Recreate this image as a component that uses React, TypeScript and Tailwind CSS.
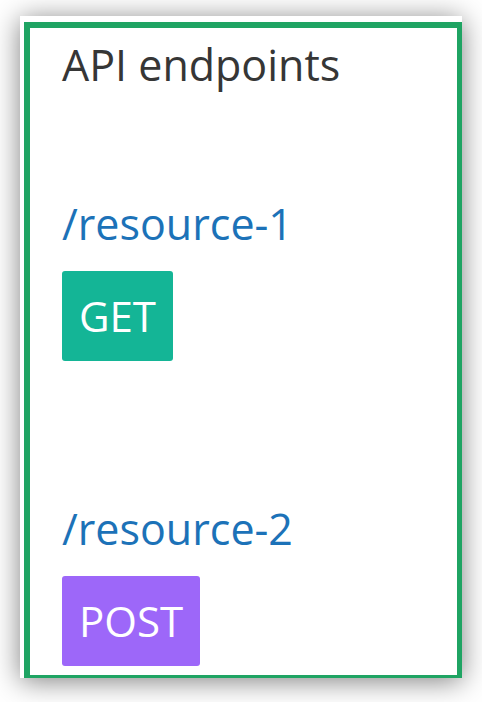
import React from "react";

export default function App() {
  return (
    <div className="w-[482px] h-[702px] bg-white overflow-hidden pt-[16px] pl-[20px]" style={{ fontFamily: '"Open Sans", sans-serif' }}>
      <div className="w-[442px] h-[662px] bg-white pl-[4px] pt-[6px] shadow-[0_3px_26px_rgba(0,0,0,0.5)]">
        <div className="w-[438px] h-[656px] border-[#1fa463] border-l-[6px] border-t-[6px] border-r-[5px] border-b-[3px] pl-[32px] pt-[7px]">
          <h1 className="text-[43px] leading-[59px] text-[#363636] font-normal">API endpoints</h1>
          <div className="mt-[100px] flex flex-col items-start">
            <a className="text-[43px] leading-[59px] text-[#1c72b8]">/resource-1</a>
            <span className="mt-[18px] h-[90px] px-[17px] leading-[90px] text-[42px] text-white bg-[#14b596] rounded-[3px]">GET</span>
          </div>
          <div className="mt-[138px] flex flex-col items-start">
            <a className="text-[43px] leading-[59px] text-[#1c72b8]">/resource-2</a>
            <span className="mt-[18px] h-[90px] px-[17px] leading-[90px] text-[42px] text-white bg-[#9d67f9] rounded-[3px]">POST</span>
          </div>
        </div>
      </div>
    </div>
  );
}
